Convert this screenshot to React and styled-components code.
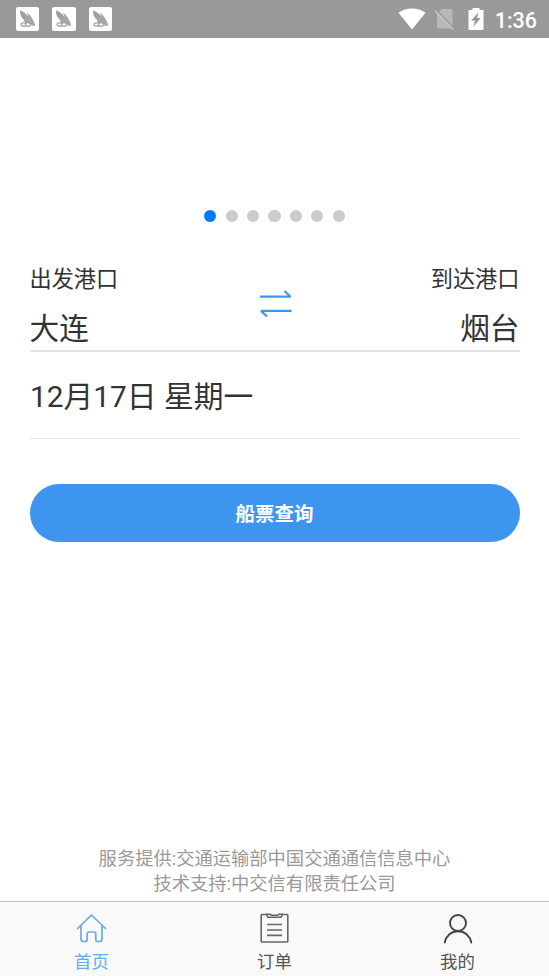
import styled, { createGlobalStyle } from "styled-components"

const GlobalStyle = createGlobalStyle`
*{
  box-sizing: border-box;
}
body{
  margin:0;
  background-color: white;
  color:#333;
  font-family: Roboto, "Noto Sans CJK SC", sans-serif;
}
`;

const Container = styled.div`
height:100vh;
display:flex;
flex-direction: column;
overflow: hidden;
`;

const StatusBar = styled.div`
height:38px;
flex-shrink: 0;
padding:0 12px 0 15.5px;
display:flex;
align-items:center;
justify-content: space-between;
background-color:#999;
color:white;
`;

const Notices = styled.div`
display:flex;
gap:13px;
`;

const Notice = styled.div`
width:23.5px;
height:23.5px;
border-radius: 2px;
background-color:white;

svg{
  display:block;
}
`;

const Signals = styled.div`
display:flex;
align-items:center;
`;

const Glyph = styled.svg`
display:block;
margin-right: ${props => props.$gap}px;
`;

const Clock = styled.span`
padding-top: 3px;
font-size:21.5px;
font-weight: 500;
line-height: 35px;
`;

const Banner = styled.div`
height:188px;
flex-shrink: 0;
padding-bottom: 4px;
display:flex;
align-items:flex-end;
justify-content: center;
gap:9.1px;
`;

const Dot = styled.span`
width:12.3px;
height:12.3px;
border-radius:50%;
background-color: ${props => props.$active ? "#007aff" : "#ccc"};
`;

const Form = styled.div`
padding:0 29.5px;
`;

const Ports = styled.div`
height:126px;
padding-top: 36px;
display:flex;
justify-content: space-between;
border-bottom: 2px solid #e4e4e4;
`;

const Port = styled.div`
width:120px;
text-align: ${props => props.$align};
`;

const PortLabel = styled.div`
font-size:22.2px;
line-height: 34px;
`;

const PortName = styled.div`
margin-top: 16px;
font-size:29.7px;
line-height: 34px;
`;

const Swap = styled.svg`
display:block;
margin-top: 26px;
margin-left: 3px;
`;

const DateRow = styled.div`
height:87px;
padding-left: 0.5px;
font-size:29.8px;
line-height: 89px;
border-bottom: 1px solid #e2e2e2;
`;

const Button = styled.button`
display:block;
width:100%;
height:58.5px;
margin-top: 44.5px;
padding:3px 0 0;
border:none;
border-radius: 30px;
background-color:#3d95ef;
color:white;
font-family: inherit;
font-size:19.5px;
font-weight: 700;
line-height: 55.5px;
`;

const Support = styled.div`
margin-top: auto;
padding-bottom: 5px;
color:#999;
font-size:18.3px;
line-height: 25px;
text-align: center;
`;

const TabBar = styled.div`
height:75px;
flex-shrink: 0;
display:flex;
background-color:#f9f9f9;
border-top: 1px solid #c4c4c4;
`;

const Tab = styled.div`
flex:1;
padding-top: 10px;
display:flex;
flex-direction: column;
align-items:center;
color: ${props => props.$active ? "#67ace9" : "#555"};

svg{
  flex-shrink: 0;
}
`;

const TabLabel = styled.span`
margin-top: 5px;
font-size:17.4px;
line-height: 26px;
`;

const ShipLogo = () => (
  <svg width="24" height="24" viewBox="0 0 24 24">
    <path d="M4 3.500C9 5 13 9 15.500 17H9.500L8 13C5.500 11 4 8 4 3.500Z" fill="#9a9a9a" />
    <path d="M11 5.500C16 9 17.500 14 19.500 18.500L14.500 17.500Z" fill="#a6a6a6" />
    <path d="M7 6L14.500 16M5 9L12 15" stroke="#c4c4c4" strokeWidth="0.5" />
    <ellipse cx="7.500" cy="17.500" rx="2.500" ry="1.600" fill="none" stroke="#a6a6a6" strokeWidth="1.200" />
    <ellipse cx="12" cy="17.500" rx="2.300" ry="1.800" fill="white" stroke="#a0a0a0" strokeWidth="1.200" />
    <path d="M6 19.300H14M15 18.300H19" stroke="#b4b4b4" strokeWidth="1" />
  </svg>
)

const HomeIcon = () => (
  <svg width="32" height="32" viewBox="0.500 1 32 32" fill="none" stroke="currentColor" strokeWidth="1.700" strokeLinecap="round" strokeLinejoin="round">
    <path d="M2 17.500L16 4L30 17.500" />
    <path d="M5.500 15V28Q5.500 30.500 8 30.500H9.700Q11.700 30.500 11.700 28.500V23Q11.700 21 13.500 21H18.500Q20.300 21 20.300 23V28.500Q20.300 30.500 22.300 30.500H24Q26.500 30.500 26.500 28V15" />
  </svg>
)

const OrderIcon = () => (
  <svg width="32" height="32" viewBox="0.500 1 32 32" fill="none" stroke="#666" strokeWidth="1.600" strokeLinejoin="round">
    <path d="M8.500 3.500H3.500Q2.700 3.500 2.700 4.300V30.200Q2.700 31 3.500 31H28.500Q29.300 31 29.300 30.200V4.300Q29.300 3.500 28.500 3.500H23.500" />
    <path d="M8 3.200H11.500L13 4.300H19L20.500 3.200H24L22.500 6.300H9.500Z" />
    <path d="M8.500 13.500H23.500M8.500 19H23.500M8.500 24.400H23.500" />
  </svg>
)

const UserIcon = () => (
  <svg width="32" height="32" viewBox="0 0.500 32 32" fill="none" stroke="#444" strokeWidth="1.900" strokeLinecap="round">
    <circle cx="16" cy="11.500" r="8" />
    <path d="M2.700 31C4 24.500 9 19.700 16 19.700S28 24.500 29.300 31" />
  </svg>
)

const tabs = [
  { label: "首页", icon: <HomeIcon />, active: true },
  { label: "订单", icon: <OrderIcon /> },
  { label: "我的", icon: <UserIcon /> },
]

const App = () => {
  return (
    <Container>
      <GlobalStyle />
      <StatusBar>
        <Notices>
          {[0, 1, 2].map(n => <Notice key={n}><ShipLogo /></Notice>)}
        </Notices>
        <Signals>
          <Glyph $gap={8} width="28" height="22" viewBox="0 0 28 22">
            <path d="M0.500 4.800C8-1 20-1 27.500 4.800L14 21.500Z" fill="white" />
          </Glyph>
          <Glyph $gap={12.500} width="21" height="22" viewBox="0 0 21 22">
            <path d="M8 1H17Q18.500 1 18.500 2.500V20.500H4.500Q3 20.500 3 19V5.500Z" fill="#b7b7b7" />
            <path d="M2 1.500L20.500 20.500" stroke="#999" strokeWidth="1.500" />
            <path d="M0.800 2.600L19.300 21.600" stroke="#c2c2c2" strokeWidth="1.700" />
          </Glyph>
          <Glyph $gap={11} width="16" height="24" viewBox="0 0 16 24">
            <path d="M4.500 1H11.500V3H15Q15.500 3 15.500 4V22Q15.500 23 14.500 23H1.500Q0.500 23 0.500 22V4Q0.500 3 1.500 3H4.500Z" fill="white" />
            <path d="M10.500 5.500L3 13.500H7L5.500 19.500L12.800 11H9Z" fill="#999" />
          </Glyph>
          <Clock>1:36</Clock>
        </Signals>
      </StatusBar>
      <Banner>
        {[0, 1, 2, 3, 4, 5, 6].map(n => <Dot key={n} $active={n === 0} />)}
      </Banner>
      <Form>
        <Ports>
          <Port $align="left">
            <PortLabel>出发港口</PortLabel>
            <PortName>大连</PortName>
          </Port>
          <Swap width="34" height="32" viewBox="0 0 34 32" fill="none" stroke="#3d95ef" strokeWidth="2.200" strokeLinejoin="bevel">
            <path d="M1 8.700H31.500L25.500 3" />
            <path d="M32.500 22.900H2L8 28.500" />
          </Swap>
          <Port $align="right">
            <PortLabel>到达港口</PortLabel>
            <PortName>烟台</PortName>
          </Port>
        </Ports>
        <DateRow>12月17日 星期一</DateRow>
        <Button>船票查询</Button>
      </Form>
      <Support>
        <div>服务提供:交通运输部中国交通通信信息中心</div>
        <div>技术支持:中交信有限责任公司</div>
      </Support>
      <TabBar>
        {tabs.map(tab => (
          <Tab key={tab.label} $active={tab.active}>
            {tab.icon}
            <TabLabel>{tab.label}</TabLabel>
          </Tab>
        ))}
      </TabBar>
    </Container>
  )
}

export default App
